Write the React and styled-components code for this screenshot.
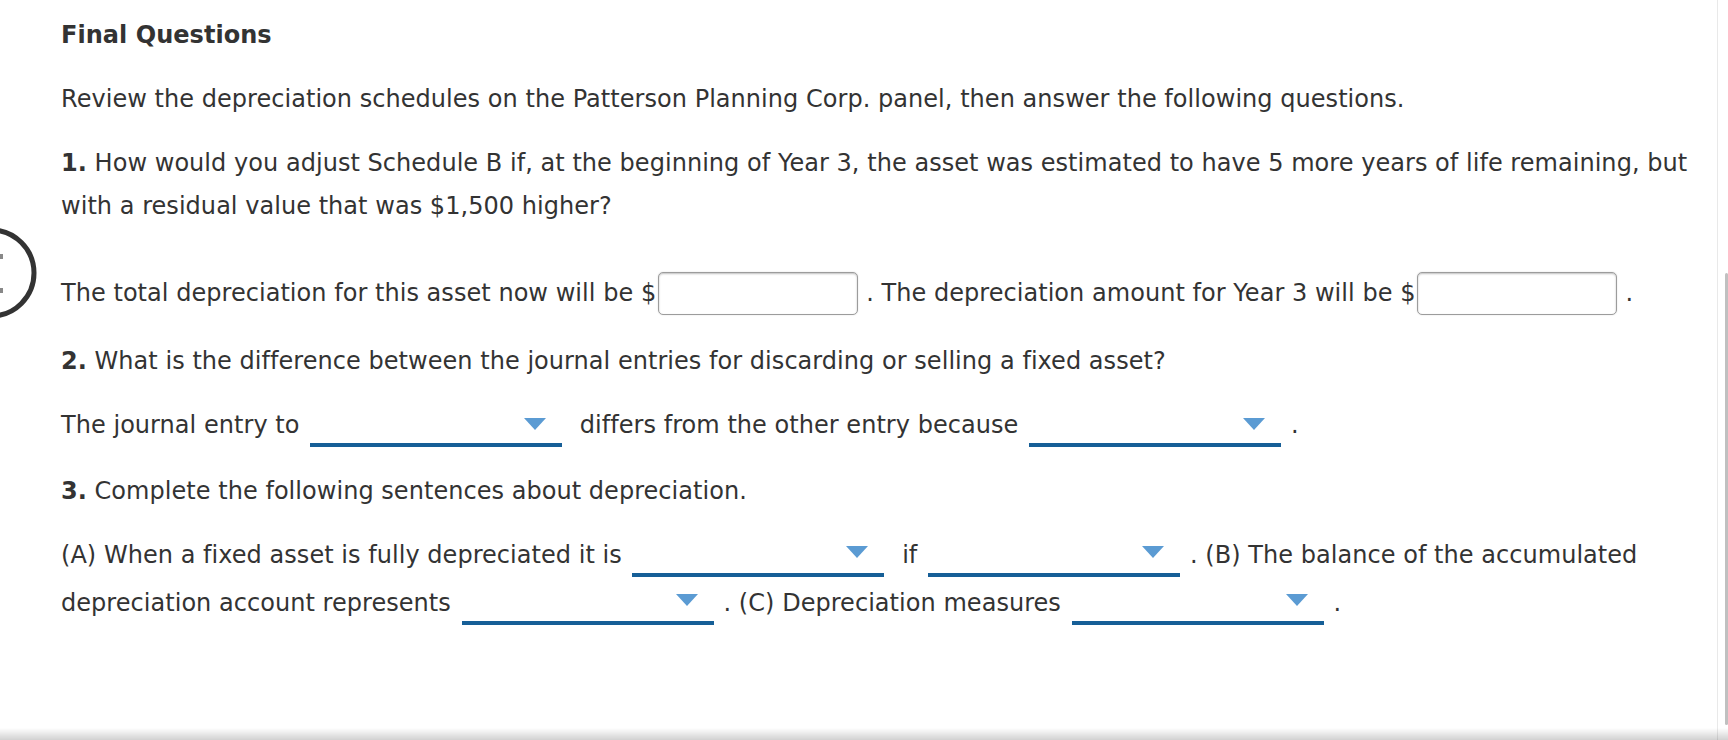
import React from "react";
import styled, { createGlobalStyle } from "styled-components";

const GlobalStyle = createGlobalStyle`
  html, body {
    margin: 0;
    padding: 0;
    background: #fff;
    overflow: hidden;
  }
`;

const Frame = styled.div`
  position: relative;
  box-sizing: border-box;
  width: 1718px;
  height: 740px;
  border-right: 1px solid #e9e9e9;
  padding: 14px 12px 0 61px;
  font-family: "DejaVu Sans", Verdana, sans-serif;
  font-size: 24px;
  line-height: 43px;
  letter-spacing: 0.04px;
  color: #333;
`;

const Title = styled.h2`
  margin: 0;
  font-size: 24px;
  font-weight: bold;
  line-height: 43px;
`;

const Dropdown = styled.span`
  display: inline-flex;
  align-items: center;
  justify-content: flex-end;
  box-sizing: border-box;
  width: 252px;
  height: 43px;
  padding-right: 16px;
  margin: 0 10px 0 3px;
  vertical-align: top;
  border-bottom: 4px solid #165f97;
`;

const Arrow = styled.span`
  width: 0;
  height: 0;
  border-left: 11px solid transparent;
  border-right: 11px solid transparent;
  border-top: 12px solid #5b9bd3;
`;

const Para = styled.p`
  margin: ${(p) => p.$top || 21}px 0 0;
  line-height: ${(p) => (p.$tall ? 48 : 43)}px;

  ${Dropdown} {
    height: ${(p) => (p.$tall ? 46 : 43)}px;
  }
`;

const Num = styled.b`
  font-weight: bold;
`;

const AmountInput = styled.input`
  box-sizing: border-box;
  width: 200px;
  height: 43px;
  margin: 0 8px 0 2px;
  vertical-align: top;
  border: 1px solid #9c9c9c;
  border-radius: 5px;
  background: #fff;
  box-shadow: inset 0 1px 2px rgba(0, 0, 0, 0.25), 0 0 2px rgba(0, 0, 0, 0.12);
  font: inherit;
  outline: none;
`;

const SideBadge = styled.svg`
  position: absolute;
  left: 0;
  top: 226px;
`;

const ScrollThumb = styled.div`
  position: fixed;
  right: 0;
  top: 273px;
  width: 3px;
  height: 452px;
  border-radius: 2px;
  background: #c0c0c0;
`;

const BottomShade = styled.div`
  position: fixed;
  left: 0;
  right: 0;
  bottom: 0;
  height: 12px;
  background: linear-gradient(to bottom, rgba(0, 0, 0, 0), rgba(0, 0, 0, 0.18));
`;

const Select = () => (
  <Dropdown>
    <Arrow />
  </Dropdown>
);

export default function App() {
  return (
    <>
      <GlobalStyle />
      <Frame>
        <SideBadge width="40" height="96" viewBox="0 0 40 96">
          <circle cx="-9" cy="47" r="43" fill="none" stroke="#333" strokeWidth="5" />
          <rect x="0" y="28" width="3" height="5" fill="#888" />
          <rect x="0" y="62" width="3" height="5" fill="#888" />
        </SideBadge>

        <Title>Final Questions</Title>
        <Para>
          Review the depreciation schedules on the Patterson Planning Corp. panel, then answer the
          following questions.
        </Para>

        <Para>
          <Num>1.</Num> How would you adjust Schedule B if, at the beginning of Year 3, the asset was
          estimated to have 5 more years of life remaining, but with a residual value that was $1,500
          higher?
        </Para>
        <Para $top={44}>
          The total depreciation for this asset now will be $<AmountInput />. The depreciation amount
          for Year 3 will be $<AmountInput />.
        </Para>

        <Para $top={25}>
          <Num>2.</Num> What is the difference between the journal entries for discarding or selling a
          fixed asset?
        </Para>
        <Para>
          The journal entry to <Select /> differs from the other entry because <Select />.
        </Para>

        <Para $top={23}>
          <Num>3.</Num> Complete the following sentences about depreciation.
        </Para>
        <Para $tall $top={18}>
          (A) When a fixed asset is fully depreciated it is <Select /> if <Select />. (B) The balance
          of the accumulated depreciation account represents <Select />. (C) Depreciation measures{" "}
          <Select />.
        </Para>
      </Frame>
      <ScrollThumb />
      <BottomShade />
    </>
  );
}
